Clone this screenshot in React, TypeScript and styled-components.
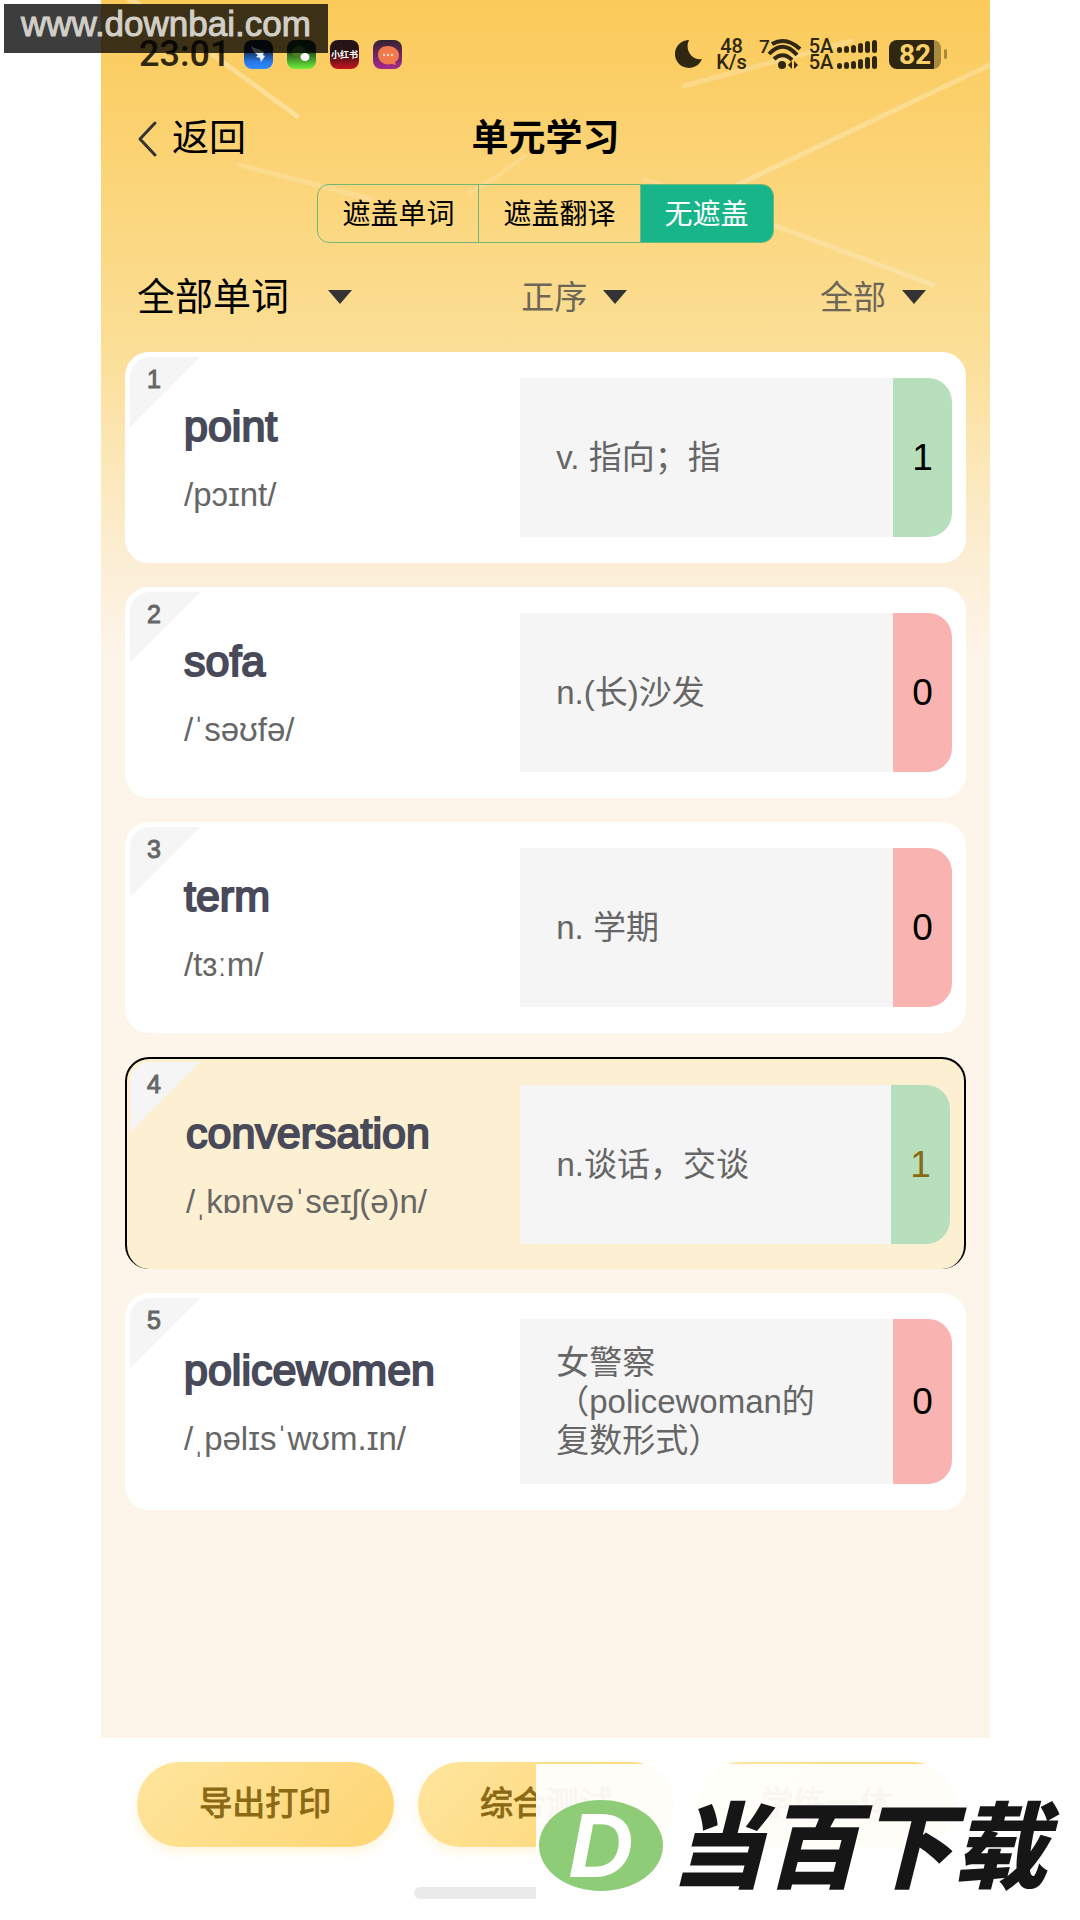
import React, { useState } from "react";
import styled, { createGlobalStyle, css } from "styled-components";

const SANS = `"Liberation Sans", "Noto Sans CJK SC", sans-serif`;

const GlobalStyle = createGlobalStyle`
  *, *::before, *::after { box-sizing: border-box; }
  body { margin: 0; background: #fff; font-family: ${SANS}; color: #000; }
  button, select { font: inherit; color: inherit; border: 0; background: none; padding: 0; margin: 0; cursor: pointer; }
  h1, h2, p, ol { margin: 0; padding: 0; font-weight: 400; }
`;

const Page = styled.div`
  position: relative;
  min-height: 100vh;
  padding: 0 90px 0 101px;
  display: flex;
  overflow: hidden;
`;

const Phone = styled.div`
  flex: 1;
  min-width: 0;
  display: flex;
  flex-direction: column;
`;

const Screen = styled.main`
  position: relative;
  flex: 1;
  padding: 0 24px 24px;
  background: linear-gradient(#fbca59 0, #fbdf97 352px, #fceed5 560px, #fdf5ea 660px);
`;

const Streaks = styled.svg`
  position: absolute;
  top: 0;
  left: 0;
  pointer-events: none;
`;

const Header = styled.header`
  position: relative;
  padding: 0 12px;
`;

const StatusBar = styled.div`
  display: flex;
  align-items: center;
  height: 36px;
  margin-top: 36px;
  color: #2f270f;
  font-family: Roboto, sans-serif;
`;

const Clock = styled.time`
  width: 107px;
  padding-left: 2px;
  font-size: 36px;
  line-height: 36px;
  font-weight: 500;
`;

const AppIcons = styled.div`
  display: flex;
  gap: 14px;
  flex: 1;
`;

const SystemIcons = styled.div`
  display: flex;
  align-items: center;
  padding-right: 7px;
`;

const WifiIcon = styled.svg`
  overflow: visible;
  margin-right: 4px;
`;

const Stacked = styled.div<{ $w: number }>`
  width: ${(p) => p.$w}px;
  text-align: center;
  font-size: 20px;
  line-height: 16px;
  font-weight: 500;
`;

const Battery = styled.div`
  display: flex;
  align-items: center;
  gap: 3px;
  margin-left: 11px;
  &::after {
    content: "";
    width: 3px;
    height: 10px;
    border-radius: 2px;
    background: #a78a40;
  }
`;

const BatteryLevel = styled.span`
  width: 52px;
  height: 29px;
  border-radius: 8px;
  background: linear-gradient(90deg, #2f270f 45px, #a78a40 45px);
  color: #fbd068;
  font-size: 28px;
  line-height: 30px;
  font-weight: 700;
  text-align: center;
`;

const TitleBar = styled.div`
  display: grid;
  grid-template-columns: 1fr auto 1fr;
  align-items: center;
  height: 56px;
  margin-top: 39px;
`;

const BackButton = styled.button`
  display: flex;
  align-items: center;
  gap: 15px;
  font-size: 37px;
  line-height: 56px;
`;

const Title = styled.h1`
  font-size: 37px;
  line-height: 56px;
  font-weight: 700;
`;

const Segments = styled.div`
  display: flex;
  width: max-content;
  height: 59px;
  margin: 17px auto 0;
  border: 1px solid #6fb877;
  border-radius: 12px;
  overflow: hidden;
`;

const Segment = styled.button<{ $active: boolean }>`
  padding: 0 24px 4px;
  font-size: 28px;
  & + & { border-left: 1px solid #6fb877; }
  ${(p) => p.$active && css`
    background: #19b58a;
    color: #fff;
  `}
`;

const Filters = styled.div`
  display: grid;
  grid-template-columns: 9fr 7fr auto;
  align-items: center;
  height: 56px;
  margin-top: 26px;
  padding-right: 28px;
`;

const Filter = styled.label<{ $main?: boolean }>`
  display: flex;
  align-items: center;
  gap: ${(p) => (p.$main ? 38 : 16)}px;
  font-size: ${(p) => (p.$main ? 38 : 33)}px;
  color: ${(p) => (p.$main ? "#000" : "#6c6659")};
`;

const FilterSelect = styled.select`
  appearance: none;
  height: 56px;
  outline: 0;
`;

const Caret = styled.span`
  border: solid transparent;
  border-width: 14px 12px 0;
  border-top-color: #333;
`;

const WordList = styled.ol`
  position: relative;
  display: flex;
  flex-direction: column;
  gap: 24px;
  margin-top: 27px;
  list-style: none;
`;

const Corner = styled.span`
  position: absolute;
  top: 5px;
  left: 5px;
  width: 70px;
  height: 70px;
  padding: 6px 0 0 17px;
  border-top-left-radius: 20px;
  background: linear-gradient(135deg, #f5f5f5 50%, transparent 50%);
  font-size: 25px;
  line-height: 32px;
  color: #666;
  -webkit-text-stroke: 1px #666;
`;

const Card = styled.li<{ $active: boolean }>`
  position: relative;
  display: flex;
  padding: 26px 0;
  border-radius: 24px;
  background: #fff;
  ${(p) => p.$active && css`
    border: 2px solid #000;
    border-bottom: 0;
    padding-bottom: 25px;
    background: #fdefd1;
    ${Corner} {
      top: 3px;
      left: 3px;
    }
  `}
`;

const Entry = styled.div`
  flex: 0 0 47%;
  display: flex;
  flex-direction: column;
  justify-content: center;
  gap: 23px;
  padding-left: 59px;
`;

const Word = styled.h2`
  font-size: 43px;
  line-height: 52px;
  color: #484a59;
  -webkit-text-stroke: 2px #484a59;
`;

const Phonetic = styled.p`
  font-size: 33px;
  line-height: 40px;
  color: #666;
`;

const Meaning = styled.p`
  flex: 1;
  min-width: 0;
  min-height: 159px;
  display: flex;
  align-items: center;
  padding: 24px 60px 24px 36px;
  background: #f5f5f5;
  font-size: 33px;
  line-height: 39px;
  color: #666;
`;

const Score = styled.span<{ $good: boolean; $active: boolean }>`
  width: 59px;
  margin-right: 14px;
  display: flex;
  align-items: center;
  justify-content: center;
  border-radius: 0 24px 24px 0;
  background: ${(p) => (p.$good ? "#b7dfbb" : "#f9b3b0")};
  font-size: 37px;
  color: ${(p) => (p.$active ? "#8b6914" : "#000")};
`;

const Footer = styled.footer`
  height: 182px;
  padding: 24px 35px 0 36px;
  background: #fff;
`;

const Actions = styled.div`
  display: flex;
  gap: 24px;
`;

const Action = styled.button`
  flex: 1;
  height: 85px;
  padding-bottom: 8px;
  border-radius: 43px;
  background: linear-gradient(135deg, #fee59d, #fed573);
  box-shadow: 0 4px 12px rgba(254, 220, 130, 0.3);
  color: #8b6914;
  font-size: 33px;
  -webkit-text-stroke: 1px #8b6914;
`;

const HomeBar = styled.div`
  width: 265px;
  height: 12px;
  margin: 40px auto 0;
  border-radius: 6px;
  background: #eaeaea;
`;

const SiteTag = styled.div`
  position: absolute;
  top: 4px;
  left: 4px;
  width: 324px;
  height: 49px;
  padding-left: 17px;
  background: rgba(0, 0, 0, 0.76);
  color: #d2cfc8;
  font-size: 35px;
  line-height: 39px;
  -webkit-text-stroke: 1px #d2cfc8;
`;

const Brand = styled.div`
  position: absolute;
  right: 0;
  bottom: 0;
  width: 544px;
  height: 156px;
  display: flex;
  align-items: center;
  gap: 8px;
  padding: 6px 0 0 3px;
  background: rgba(255, 255, 255, 0.94);
`;

const BrandMark = styled.span`
  width: 124px;
  height: 91px;
  border-radius: 50%;
  background: #8fcc78;
  color: #fff;
  font-size: 90px;
  line-height: 92px;
  font-weight: 700;
  font-style: italic;
  text-align: center;
`;

const BrandName = styled.span`
  padding-top: 8px;
  color: #161616;
  font-size: 94px;
  line-height: 100px;
  font-weight: 900;
  font-style: italic;
  white-space: nowrap;
`;

const words = [
  { word: "point", phonetic: "/pɔɪnt/", meaning: "v. 指向；指", score: 1 },
  { word: "sofa", phonetic: "/ˈsəʊfə/", meaning: "n.(长)沙发", score: 0 },
  { word: "term", phonetic: "/tɜːm/", meaning: "n. 学期", score: 0 },
  { word: "conversation", phonetic: "/ˌkɒnvəˈseɪʃ(ə)n/", meaning: "n.谈话，交谈", score: 1 },
  { word: "policewomen", phonetic: "/ˌpəlɪsˈwʊm.ɪn/", meaning: "女警察（policewoman的复数形式）", score: 0 },
];

const modes = ["遮盖单词", "遮盖翻译", "无遮盖"];

function AppBadges() {
  return (
    <AppIcons>
      <svg width="29" height="29" viewBox="0 0 29 29" aria-hidden="true">
        <defs>
          <linearGradient id="blue" x2="0" y2="1"><stop offset=".3" stopColor="#101d35" /><stop offset=".75" stopColor="#2878e8" /><stop offset="1" stopColor="#2f8bff" /></linearGradient>
        </defs>
        <rect width="29" height="29" rx="8" fill="url(#blue)" />
        <path d="M7 6c4 3 9 3 13 6l-1 3 2 1-4 6-1-4-4-1 2-2c-4-2-6-5-7-9z" fill="#e6f0ff" />
      </svg>
      <svg width="29" height="29" viewBox="0 0 29 29" aria-hidden="true">
        <defs>
          <linearGradient id="green" x2="0" y2="1"><stop offset=".3" stopColor="#173315" /><stop offset="1" stopColor="#6cf23c" /></linearGradient>
        </defs>
        <rect width="29" height="29" rx="8" fill="url(#green)" />
        <ellipse cx="12" cy="12" rx="7" ry="6" fill="#4d7f22" />
        <ellipse cx="18" cy="17" rx="4.5" ry="4" fill="#fff" />
      </svg>
      <svg width="29" height="29" viewBox="0 0 29 29" aria-hidden="true">
        <defs>
          <linearGradient id="red" x2="0" y2="1"><stop offset=".4" stopColor="#251316" /><stop offset="1" stopColor="#c81420" /></linearGradient>
        </defs>
        <rect width="29" height="29" rx="8" fill="url(#red)" />
        <text x="14.5" y="18" fontSize="9" fontWeight="700" fill="#fff" textAnchor="middle" fontFamily="Noto Sans CJK SC, sans-serif">小红书</text>
      </svg>
      <svg width="29" height="29" viewBox="0 0 29 29" aria-hidden="true">
        <defs>
          <linearGradient id="purple" x2="0" y2="1"><stop offset="0" stopColor="#332330" /><stop offset="1" stopColor="#a8288f" /></linearGradient>
        </defs>
        <rect width="29" height="29" rx="8" fill="url(#purple)" />
        <path d="M15 6c6 0 11 4 11 9 0 4-2 6-4 7l1 3-4-1c-8 2-14-3-14-9s4-9 10-9z" fill="#ef7b4d" />
        <g fill="#ffd9c4"><circle cx="11" cy="15" r="1.2" /><circle cx="15" cy="15" r="1.2" /><circle cx="19" cy="15" r="1.2" /></g>
      </svg>
    </AppIcons>
  );
}

function SignalDots() {
  const heights = [6, 7, 8, 10, 12, 13];
  return (
    <svg width="42" height="32" viewBox="0 0 42 32" fill="currentColor" aria-hidden="true">
      {[15, 31].map((base) =>
        heights.map((h, i) => <rect key={`${base}-${i}`} x={i * 7 + 1} y={base - h} width="5" height={h} rx="2.5" />)
      )}
    </svg>
  );
}

export default function App() {
  const [mode, setMode] = useState(2);
  const [active, setActive] = useState(3);

  return (
    <>
      <GlobalStyle />
      <Page>
        <Phone>
          <Screen>
            <Streaks width="889" height="310" viewBox="0 0 889 310" fill="none" stroke="#fff" strokeLinecap="round" aria-hidden="true">
              <path d="M28 0L38 4M112 55L196 116" strokeWidth="5" opacity=".3" />
              <path d="M139 165L270 199" strokeWidth="5" opacity=".16" />
              <path d="M583 86L750 41" strokeWidth="5" opacity=".22" />
              <path d="M889 65L636 185" strokeWidth="5" opacity=".25" />
              <path d="M369 193Q396 177 424 156M543 179L560 184" strokeWidth="4" opacity=".14" />
              <path d="M675 226L832 285" strokeWidth="5" opacity=".2" />
            </Streaks>
            <Header>
              <StatusBar>
                <Clock>23:01</Clock>
                <AppBadges />
                <SystemIcons>
                  <svg width="28" height="30" viewBox="0 0 28 30" fill="currentColor" aria-hidden="true">
                    <path d="M13 1A14 14 0 1 0 27 20C18 22 9 12 14 1z" />
                  </svg>
                  <Stacked $w={57}>48<br />K/s</Stacked>
                  <WifiIcon width="42" height="32" viewBox="0 0 42 32" fill="none" stroke="currentColor" aria-hidden="true">
                    <text x="-1" y="15" fontSize="19" fontWeight="500" fill="currentColor" stroke="none" fontFamily="Roboto, sans-serif">7</text>
                    <path d="M12 6Q26 -2 40 11M9 16Q23 1 37 17M14 21Q23 13 32 22" strokeWidth="4" />
                    <circle cx="22" cy="27" r="4" fill="currentColor" stroke="none" />
                    <path d="M32 23v8l-4-4zM34 23v8l4-4z" fill="currentColor" stroke="none" />
                  </WifiIcon>
                  <Stacked $w={30}>5A<br />5A</Stacked>
                  <SignalDots />
                  <Battery><BatteryLevel>82</BatteryLevel></Battery>
                </SystemIcons>
              </StatusBar>
              <TitleBar>
                <BackButton>
                  <svg width="20" height="36" viewBox="0 0 20 36" fill="none" stroke="#333" strokeWidth="3" strokeLinecap="round" strokeLinejoin="round" aria-hidden="true">
                    <path d="M18 2L3 18L18 34" />
                  </svg>
                  返回
                </BackButton>
                <Title>单元学习</Title>
              </TitleBar>
              <Segments>
                {modes.map((m, i) => (
                  <Segment key={m} $active={i === mode} onClick={() => setMode(i)}>{m}</Segment>
                ))}
              </Segments>
              <Filters>
                <Filter $main>
                  <FilterSelect aria-label="单词范围"><option>全部单词</option></FilterSelect>
                  <Caret />
                </Filter>
                <Filter>
                  <FilterSelect aria-label="排序"><option>正序</option></FilterSelect>
                  <Caret />
                </Filter>
                <Filter>
                  <FilterSelect aria-label="筛选"><option>全部</option></FilterSelect>
                  <Caret />
                </Filter>
              </Filters>
            </Header>
            <WordList>
              {words.map((w, i) => (
                <Card key={w.word} $active={i === active} onClick={() => setActive(i)}>
                  <Corner>{i + 1}</Corner>
                  <Entry>
                    <Word>{w.word}</Word>
                    <Phonetic>{w.phonetic}</Phonetic>
                  </Entry>
                  <Meaning>{w.meaning}</Meaning>
                  <Score $good={w.score > 0} $active={i === active}>{w.score}</Score>
                </Card>
              ))}
            </WordList>
          </Screen>
          <Footer>
            <Actions>
              <Action>导出打印</Action>
              <Action>综合测试</Action>
              <Action>学练一体</Action>
            </Actions>
            <HomeBar />
          </Footer>
        </Phone>
        <SiteTag>www.downbai.com</SiteTag>
        <Brand>
          <BrandMark>D</BrandMark>
          <BrandName>当百下载</BrandName>
        </Brand>
      </Page>
    </>
  );
}
